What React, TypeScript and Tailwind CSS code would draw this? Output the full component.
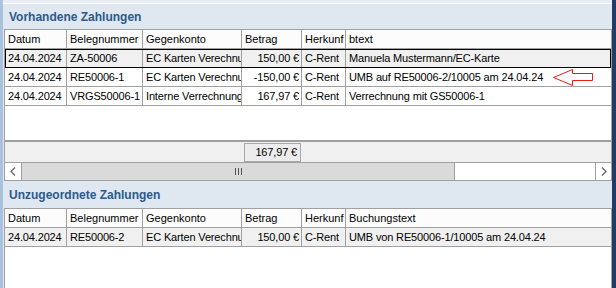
import React from 'react';

type Row = {
  datum: string;
  beleg: string;
  konto: string;
  betrag: string;
  herkunft: string;
  text: string;
};

const vorhandene: Row[] = [
  { datum: '24.04.2024', beleg: 'ZA-50006', konto: 'EC Karten Verechnung', betrag: '150,00 €', herkunft: 'C-Rent', text: 'Manuela Mustermann/EC-Karte' },
  { datum: '24.04.2024', beleg: 'RE50006-1', konto: 'EC Karten Verechnung', betrag: '-150,00 €', herkunft: 'C-Rent', text: 'UMB auf RE50006-2/10005 am 24.04.24' },
  { datum: '24.04.2024', beleg: 'VRGS50006-1', konto: 'Interne Verrechnung', betrag: '167,97 €', herkunft: 'C-Rent', text: 'Verrechnung mit GS50006-1' },
];

const unzugeordnete: Row[] = [
  { datum: '24.04.2024', beleg: 'RE50006-2', konto: 'EC Karten Verechnung', betrag: '150,00 €', herkunft: 'C-Rent', text: 'UMB von RE50006-1/10005 am 24.04.24' },
];

const cols = 'grid grid-cols-[62px_76px_99px_60px_44px_1fr]';
const cell = 'h-full overflow-hidden whitespace-nowrap border-r border-[#a0a0a0] pl-[3px] leading-[18px]';

/**
 * Red hint arrow drawn over the grid
 */
const HintArrow: React.FC = () => (
  <svg className="absolute left-[548px] top-[1px]" width="41" height="17" viewBox="0 0 41 17">
    <polygon
      points="0.5,8.5 19.5,0.5 19.5,4.5 39.5,4.5 39.5,11.5 19.5,11.5 19.5,16.5"
      fill="white"
      stroke="#e31b1b"
      strokeWidth="1"
    />
  </svg>
);

const GridHeader: React.FC<{ last: string }> = ({ last }) => (
  <div className={`${cols} h-[19px] border-b border-[#a0a0a0] bg-[#fcfcfc]`}>
    <div className={cell}>Datum</div>
    <div className={cell}>Belegnummer</div>
    <div className={cell}>Gegenkonto</div>
    <div className={cell}>Betrag</div>
    <div className={cell}>Herkunf</div>
    <div className="h-full overflow-hidden whitespace-nowrap pl-[3px] leading-[18px]">{last}</div>
  </div>
);

const GridRow: React.FC<{ row: Row; shaded?: boolean; focused?: boolean; arrow?: boolean }> = ({ row, shaded, focused, arrow }) => (
  <div
    className={`${cols} relative h-[19px] border-b border-[#a0a0a0] tracking-[-0.15px] ${shaded ? 'bg-[#f0f0f0]' : 'bg-white'} ${
      focused ? 'outline outline-black -outline-offset-1' : ''
    }`}
  >
    <div className={cell}>{row.datum}</div>
    <div className={cell}>{row.beleg}</div>
    <div className={cell}>{row.konto}</div>
    <div className={`${cell} pr-[2px] text-right`}>{row.betrag}</div>
    <div className={cell}>{row.herkunft}</div>
    <div className="h-full overflow-hidden whitespace-nowrap pl-[3px] leading-[18px]">{row.text}</div>
    {arrow && <HintArrow />}
  </div>
);

const Chevron: React.FC<{ dir: 'left' | 'right' }> = ({ dir }) => (
  <svg width="6" height="9" viewBox="0 0 6 9">
    <polyline
      points={dir === 'left' ? '5,0.5 1,4.5 5,8.5' : '1,0.5 5,4.5 1,8.5'}
      fill="none"
      stroke="#606060"
      strokeWidth="1.2"
    />
  </svg>
);

const PanelTitle: React.FC<{ title: string; h: string }> = ({ title, h }) => (
  <div className={`${h} flex items-center pl-[6px] text-[12px] font-bold text-[#2b5a8b]`}>{title}</div>
);

export default function App() {
  return (
    <div className="flex h-[288px] w-[616px] overflow-hidden bg-[#dfe7f0] text-[11px] text-black [font-family:'Liberation_Sans',Arial,sans-serif]">
      <div className="w-[3px] bg-[#a9c3df]" />

      <div className="flex min-w-0 flex-1 flex-col">
        <div className="h-[3px] bg-[#e9eef4]" />
        <div className="h-[1px] bg-white" />

        {/* Vorhandene Zahlungen */}
        <PanelTitle title="Vorhandene Zahlungen" h="h-[25px]" />
        <div className="ml-[1px] flex h-[152px] flex-col border border-[#a0a0a0] bg-white">
          <GridHeader last="btext" />
          <GridRow row={vorhandene[0]} shaded focused />
          <GridRow row={vorhandene[1]} arrow />
          <GridRow row={vorhandene[2]} />
          <div className="flex-1 bg-white" />
          <div className="flex h-[23px] items-center border-t-2 border-b border-[#a0a0a0] bg-[#f0f0f0]">
            <div className="ml-[239px] h-[19px] w-[57px] border border-[#a8a8a8] bg-[#ececec] pr-[3px] text-right leading-[17px] tracking-[-0.15px]">
              167,97 €
            </div>
          </div>
          <div className="flex h-[17px] bg-white">
            <div className="flex w-[17px] items-center justify-center border-r border-[#a0a0a0] bg-white">
              <Chevron dir="left" />
            </div>
            <div className="flex w-[433px] items-center justify-center gap-[2px] border-r border-[#a0a0a0] bg-[#dadada]">
              <div className="h-[7px] w-px bg-[#555]" />
              <div className="h-[7px] w-px bg-[#555]" />
              <div className="h-[7px] w-px bg-[#555]" />
            </div>
            <div className="flex-1 bg-white" />
            <div className="flex w-[16px] items-center justify-center border-l border-[#a0a0a0] bg-white">
              <Chevron dir="right" />
            </div>
          </div>
        </div>

        {/* Unzugeordnete Zahlungen */}
        <PanelTitle title="Unzugeordnete Zahlungen" h="h-[27px]" />
        <div className="ml-[1px] flex flex-1 flex-col border-x border-t border-[#a0a0a0] bg-white">
          <GridHeader last="Buchungstext" />
          <GridRow row={unzugeordnete[0]} shaded />
          <div className="flex-1 bg-white" />
        </div>
      </div>

      <div className="w-[4px] bg-[#1f3d66]" />
    </div>
  );
}
